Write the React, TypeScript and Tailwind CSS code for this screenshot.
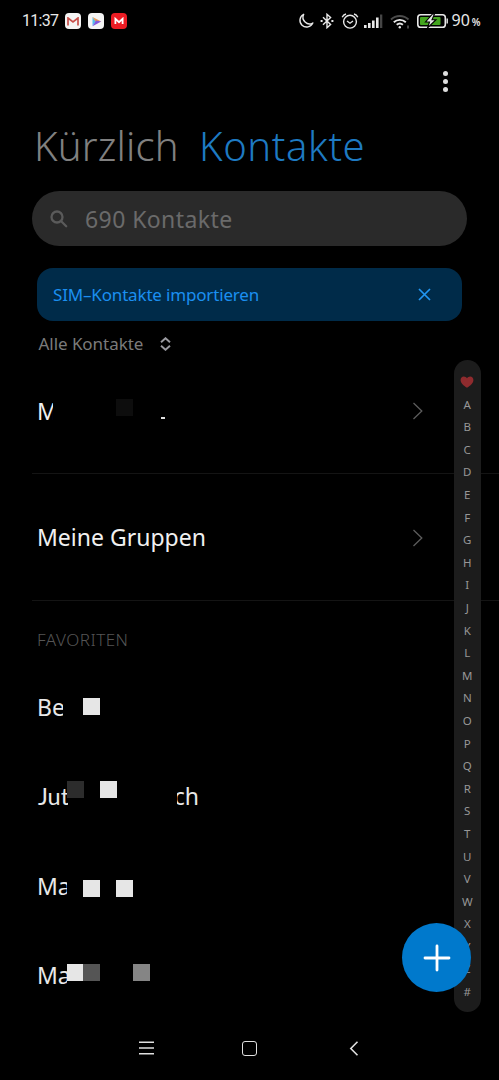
import { ReactNode } from 'react';
import clsx from 'clsx';

interface Tile {
    className: string;
}

interface Favorite {
    prefix: string;
    prefixClass: string;
    suffix?: string;
    tiles: Tile[];
}

const INDEX_LETTERS = [...'ABCDEFGHIJKLMNOPQRSTUVWXYZ#'];

const FAVORITES: Favorite[] = [
    {
        prefix: 'Be',
        prefixClass: 'w-[25.5px]',
        tiles: [{ className: 'left-[83px] top-[36px] bg-[#e6e6e6]' }]
    },
    {
        prefix: 'Jut',
        prefixClass: "w-[31px] pl-px font-['Lato'] text-[23.5px]",
        suffix: 'ch',
        tiles: [
            { className: 'left-[67px] top-[29px] bg-[#2c2c2c]' },
            { className: 'left-[100px] top-[29px] bg-[#e6e6e6]' }
        ]
    },
    {
        prefix: 'Ma',
        prefixClass: 'w-[30px]',
        tiles: [
            { className: 'left-[83px] top-[39px] bg-[#e6e6e6]' },
            { className: 'left-[116px] top-[39px] bg-[#e6e6e6]' }
        ]
    },
    {
        prefix: 'Ma',
        prefixClass: 'w-[30px]',
        tiles: [
            { className: 'left-[67px] top-[33px] bg-[#e6e6e6]' },
            { className: 'left-[83px] top-[33px] bg-[#555555]' },
            { className: 'left-[133px] top-[33px] bg-[#858585]' }
        ]
    }
];

function AppBadge({ className, children }: { className: string; children: ReactNode }) {
    return (
        <div className={clsx('flex h-4 w-4 items-center justify-center rounded-[4px]', className)}>
            {children}
        </div>
    );
}

function StatusBar() {
    return (
        <header className="flex h-[42px] items-center pl-[22px] pr-[18.5px] text-[#e8e8e8]">
            <span className="w-[36px] whitespace-nowrap font-['Roboto'] text-[16px] leading-4 tracking-[-0.7px]">11:37</span>
            <div className="ml-[7px] flex gap-[7px]">
                <AppBadge className="bg-[#f4f4f4]">
                    <svg width="12" height="9" viewBox="0 0 12 9" fill="none">
                        <path d="M1 8.5V1l5 4 5-4v7.5" stroke="#c8504b" strokeWidth="1.7" />
                    </svg>
                </AppBadge>
                <AppBadge className="bg-[#f4f4f4]">
                    <svg width="11" height="11" viewBox="0 0 11 11">
                        <path d="M1.5 1v9L5 5.5z" fill="#55bdec" />
                        <path d="M1.5 1 10.3 5.5 5 6.2z" fill="#e99a55" />
                        <path d="M1.5 10.3 10.3 5.5 5 4.6z" fill="#8358de" />
                    </svg>
                </AppBadge>
                <AppBadge className="bg-[#ec1c24]">
                    <svg width="10" height="8" viewBox="0 0 10 8" fill="none">
                        <path d="M1.4 7V1.8L5 5.2l3.6-3.4V7" stroke="#fff" strokeWidth="1.8" />
                    </svg>
                </AppBadge>
            </div>

            <div className="ml-auto flex items-center">
                {/* Do not disturb */}
                <svg width="16" height="16" viewBox="0 0 16 16" fill="none" stroke="currentColor" strokeWidth="1.4" strokeLinejoin="round">
                    <path d="M5.7 1.3A6.7 6.7 0 1 0 14.8 10 6.6 6.6 0 0 1 5.7 1.3z" />
                </svg>
                {/* Bluetooth */}
                <svg className="ml-[6px]" width="14" height="16" viewBox="0 0 14 16" fill="none" stroke="currentColor" strokeWidth="1.4">
                    <path d="m3 4.3 7.6 7.2L7 14.7V1.3l3.6 3.2L3 11.7" />
                    <path d="M0.6 8h2M11.4 8h2" strokeWidth="1.8" />
                </svg>
                {/* Alarm */}
                <svg className="ml-[7px]" width="18" height="16" viewBox="0 0 18 16" fill="none" stroke="currentColor" strokeWidth="1.4">
                    <circle cx="9" cy="8.7" r="6.4" />
                    <path d="M1.2 4.2a6 6 0 0 1 3.8-3.2M16.8 4.2A6 6 0 0 0 13 1" />
                    <path d="m6 8 3 2.2L12 8" />
                </svg>
                {/* Signal */}
                <svg className="ml-[5px]" width="19" height="14" viewBox="0 0 19 14" fill="currentColor">
                    <rect x="0" y="11" width="2.6" height="3" />
                    <rect x="4" y="9" width="2.6" height="5" />
                    <rect x="8" y="6.5" width="2.6" height="7.5" />
                    <rect x="12" y="3.5" width="2.6" height="10.5" />
                    <rect x="16" y="0.5" width="2.3" height="13.5" fill="#454545" />
                </svg>
                {/* Wi-Fi */}
                <svg className="ml-[7px]" width="20" height="15" viewBox="0 0 20 15" fill="none" stroke="currentColor" strokeWidth="1.9">
                    <path d="M1 5.5a12.6 12.6 0 0 1 17.5 0" stroke="#4b4b4b" />
                    <path d="M3.8 8.3a8.7 8.7 0 0 1 12 0" />
                    <path d="M6.7 10.8a4.8 4.8 0 0 1 6.2 0" />
                    <circle cx="9.8" cy="13.2" r="1.2" fill="currentColor" stroke="none" />
                    <path d="M18 11.5v3" stroke="#777" strokeWidth="1.2" />
                </svg>
                {/* Battery */}
                <svg className="ml-[7px]" width="32" height="14" viewBox="0 0 32 14">
                    <rect x="0.8" y="0.8" width="27.5" height="12.4" rx="2.8" fill="none" stroke="currentColor" strokeWidth="1.6" />
                    <rect x="3" y="3" width="20.5" height="8" rx="1" fill="#43a51e" />
                    <path d="M29.5 4.5h1.4v5h-1.4z" fill="currentColor" />
                    <path d="M15.5 0 8.5 8h4l-2 6L19 5.7h-4L17.5 0z" fill="currentColor" stroke="#000" strokeWidth="1.1" />
                </svg>
                <span className="ml-[3px] flex w-[29px] items-baseline whitespace-nowrap font-['Noto_Sans'] text-[16px] leading-4">
                    90<span className="ml-[2px] text-[10px] font-semibold">%</span>
                </span>
            </div>
        </header>
    );
}

function LinkRow({ className, children }: { className: string; children: ReactNode }) {
    return (
        <div className={clsx('relative ml-8 flex items-center justify-between border-b border-[#141414] pl-[5px] pr-[75px]', className)}>
            {children}
            <svg width="12" height="18" viewBox="0 0 12 18" fill="none" stroke="#5c5c5c" strokeWidth="1.3">
                <path d="m1.5 1 8.3 8-8.3 8" />
            </svg>
        </div>
    );
}

function AlphabetIndex() {
    return (
        <nav className="absolute left-[454px] top-[360px] flex h-[652px] w-[26.5px] flex-col items-center rounded-full bg-[#1c1c1c] pt-[10.5px] text-[11.5px] text-[#979797]">
            <div className="flex h-[22.6px] items-center">
                <svg width="14" height="12" viewBox="0 0 14 12" fill="#8f2b2e">
                    <path d="M7 11.8C3.5 9.4.6 7 .6 3.9.6 1.9 2 .5 3.8.5 5.2.5 6.3 1.2 7 2.3 7.7 1.2 8.8.5 10.2.5c1.8 0 3.2 1.4 3.2 3.4 0 3.1-2.9 5.5-6.4 7.9z" />
                </svg>
            </div>
            {INDEX_LETTERS.map((letter) => (
                <span key={letter} className="flex h-[22.6px] items-center leading-none">
                    {letter}
                </span>
            ))}
        </nav>
    );
}

function FavoriteRow({ favorite }: { favorite: Favorite }) {
    return (
        <li className="relative flex h-[89.6px] items-center pl-[37px] text-[23px] text-[#e8e8e8]">
            <span className={clsx('overflow-hidden whitespace-nowrap', favorite.prefixClass)}>{favorite.prefix}</span>
            {favorite.suffix && (
                <span className="ml-[109px] flex w-[22px] justify-end overflow-hidden">{favorite.suffix}</span>
            )}
            {favorite.tiles.map((tile) => (
                <span key={tile.className} className={clsx('absolute h-[17px] w-[17px]', tile.className)} />
            ))}
        </li>
    );
}

export default function App() {
    return (
        <div className="relative flex h-[1080px] w-[499px] flex-col overflow-hidden bg-black font-['Noto_Sans',sans-serif]">
            <StatusBar />

            <div className="flex h-[78px] items-center justify-end pr-[51px]">
                <button className="flex flex-col gap-[3px]">
                    <span className="h-[5px] w-[5px] rounded-full bg-[#dedede]" />
                    <span className="h-[5px] w-[5px] rounded-full bg-[#dedede]" />
                    <span className="h-[5px] w-[5px] rounded-full bg-[#dedede]" />
                </button>
            </div>

            <div className="flex h-[71px] items-start pl-[34px] pt-px text-[40px] font-light leading-[50px]">
                <span className="w-[165px] tracking-[0.2px] text-[#808080]">Kürzlich</span>
                <span className="tracking-[0.6px] text-[#1e7ac2]">Kontakte</span>
            </div>

            <div className="mx-8 flex h-[55px] shrink-0 items-center rounded-full bg-[#2a2a2a] pl-[18px]">
                <svg width="18" height="18" viewBox="0 0 18 18" fill="none" stroke="#5a5a5a" strokeWidth="2.3" strokeLinecap="round">
                    <circle cx="7" cy="7" r="5.5" />
                    <path d="m11.2 11.2 5 5" />
                </svg>
                <span className="ml-[17px] pt-px text-[23px] tracking-[0.42px] text-[#6a6a6a]">690 Kontakte</span>
            </div>

            <div className="ml-[37px] mr-[37px] mt-[22px] flex h-[53px] shrink-0 items-center justify-between rounded-2xl bg-[#002b49] pl-4 pr-[31px]">
                <span className="text-[17px] tracking-[-0.17px] text-[#1b8ff0]">SIM–Kontakte importieren</span>
                <svg width="13" height="13" viewBox="0 0 13 13" fill="none" stroke="#2196f3" strokeWidth="1.7">
                    <path d="m1 1 11 11M12 1 1 12" />
                </svg>
            </div>

            <div className="flex h-[45px] shrink-0 items-center gap-4 pl-[38.5px] text-[17px] text-[#7b7b7b]">
                <span className="w-[105px] whitespace-nowrap tracking-[-0.05px]">Alle Kontakte</span>
                <svg width="11" height="14" viewBox="0 0 11 14" fill="none" stroke="#9a9aa0" strokeWidth="1.9">
                    <path d="m1 5.2 4.5-4 4.5 4M1 8.8l4.5 4 4.5-4" />
                </svg>
            </div>

            <LinkRow className="h-[108px] pb-[17px] text-[23px] text-[#f0f0f0]">
                <span className="w-4 overflow-hidden">M</span>
                <span className="absolute left-[84px] top-[33px] h-[17px] w-[17px] bg-[#0d0d0d]" />
                <span className="absolute left-[129px] top-[51px] h-[2px] w-[4px] bg-[#e0e0e0]" />
            </LinkRow>
            <LinkRow className="h-[127px] pt-px text-[23px] text-[#f0f0f0]">
                <span>Meine Gruppen</span>
            </LinkRow>

            <h2 className="flex h-[61px] shrink-0 items-center pl-[37px] pt-[17px] text-[17px] font-light tracking-[0.5px] text-[#555555]">FAVORITEN</h2>
            <ul className="shrink-0">
                {FAVORITES.map((favorite, index) => (
                    <FavoriteRow key={index} favorite={favorite} />
                ))}
            </ul>

            <footer className="flex h-[56px] shrink-0 items-center pl-[139px] text-[#e0e0e0]">
                <svg width="15" height="14" viewBox="0 0 15 14" stroke="currentColor" strokeWidth="1.4">
                    <path d="M0 1.2h15M0 7h15M0 12.8h15" />
                </svg>
                <span className="ml-[88px] h-[15px] w-[15px] rounded-[3px] border-[1.5px] border-current" />
                <svg className="ml-[92px]" width="10" height="15" viewBox="0 0 10 15" fill="none" stroke="currentColor" strokeWidth="1.6">
                    <path d="M8.5.8 1.8 7.5l6.7 6.7" />
                </svg>
            </footer>

            <AlphabetIndex />
            <button className="absolute left-[402px] top-[923px] flex h-[69px] w-[69px] items-center justify-center rounded-full bg-[#0079cc]">
                <svg width="28" height="28" viewBox="0 0 28 28" stroke="#fff" strokeWidth="2.8" strokeLinecap="round">
                    <path d="M14 2v24M2 14h24" />
                </svg>
            </button>
        </div>
    );
}
